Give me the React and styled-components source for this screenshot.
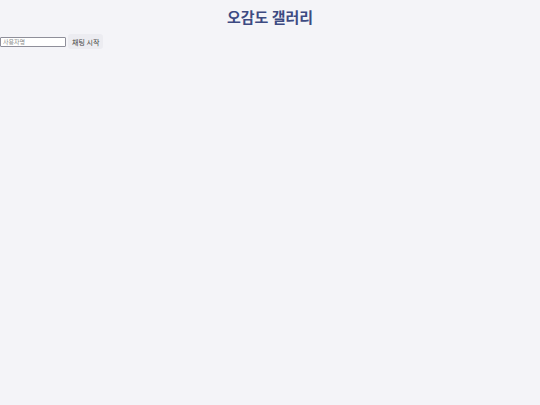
import styled, { createGlobalStyle } from 'styled-components'

const GlobalStyle = createGlobalStyle`
  html, body {
    margin: 0;
    padding: 0;
    background: #f4f4f8;
    font-family: "Noto Sans CJK KR", "Noto Sans", sans-serif;
  }
`

export default function App() {
  return (
    <>
      <GlobalStyle />
      <Page>
        <Title>오감도 갤러리</Title>
        <JoinRow>
          <NameInput placeholder="사용자명" />
          <StartButton>채팅 시작</StartButton>
        </JoinRow>
      </Page>
    </>
  )
}

const Page = styled.div`
  min-height: 405px;
  background: #f4f4f8;
`

const Title = styled.h1`
  margin: 0;
  padding-top: 6px;
  height: 28px;
  font-size: 15px;
  line-height: 22px;
  font-weight: 700;
  text-align: center;
  color: #3d4a82;
`

const JoinRow = styled.div`
  display: flex;
  align-items: center;
  gap: 2px;
  height: 15px;
`

const NameInput = styled.input`
  box-sizing: border-box;
  width: 66px;
  height: 10px;
  margin: 0;
  padding: 0 2px;
  border: 1px solid #8f8f9a;
  border-radius: 1px;
  background: #ffffff;
  font-family: inherit;
  font-size: 6px;
  color: #222;
  outline: none;

  &::placeholder {
    color: #8a8a8a;
  }
`

const StartButton = styled.button`
  box-sizing: border-box;
  height: 15px;
  padding: 0 4px;
  border: none;
  border-radius: 3px;
  background: #ececf1;
  font-family: inherit;
  font-size: 7px;
  font-weight: 400;
  color: #444;
  cursor: pointer;
`
